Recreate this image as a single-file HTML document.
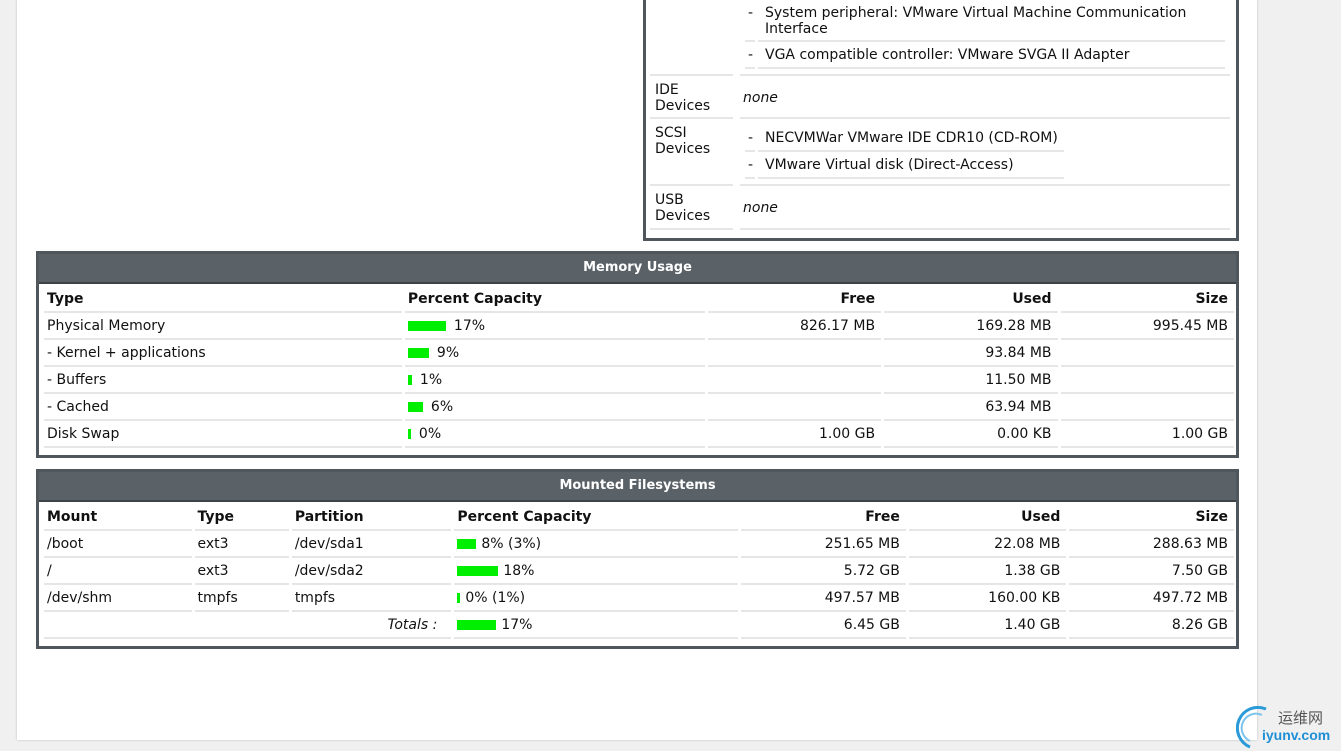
<!DOCTYPE html>
<html><head><meta charset="utf-8"><style>
body{margin:0;width:1341px;height:751px;background:#f0f0f0;position:relative;overflow:hidden;font-family:"DejaVu Sans",Verdana,sans-serif;font-size:14px;color:#111}
.page{position:absolute;left:17px;top:0;width:1240px;height:740px;background:#fff;box-shadow:0 0 2px #bbb}
.box{position:absolute;border:3px solid #50575c;background:#fff;box-sizing:border-box}
.hd{background:#5a6268;color:#fff;font-weight:bold;text-align:center;height:28px;line-height:28px;font-size:13px;border-bottom:2px solid #3d4347}
table{border-collapse:separate;border-spacing:3px 0;table-layout:fixed;margin-left:2px;margin-top:2px}
td{height:25px;border-bottom:2px solid #e6e6e6;padding:0 3px;white-space:nowrap;vertical-align:middle;overflow:hidden}
th{height:25px;border-bottom:2px solid #e6e6e6;padding:0 3px;text-align:left;font-weight:bold;vertical-align:middle}
td.r,th.r{text-align:right;padding-right:6px}
.b{display:inline-block;height:10px;background:#00ee00;vertical-align:-1px;margin-right:8px}
.abs{position:absolute}
.ln{position:absolute;height:2px;background:#e6e6e6}
i{font-style:italic}
</style></head><body>
<div class="page"></div>

<div class="box" style="left:643px;top:-10px;width:596px;height:251px;border-top:none"></div>
<div class="abs" style="left:748px;top:5px;line-height:16px">-</div>
<div class="abs" style="left:765px;top:5px;line-height:16px;width:455px">System peripheral: VMware Virtual Machine Communication Interface</div>
<div class="ln" style="left:745px;top:40px;width:10px"></div><div class="ln" style="left:758px;top:40px;width:467px"></div>
<div class="abs" style="left:748px;top:47px">-</div>
<div class="abs" style="left:765px;top:47px">VGA compatible controller: VMware SVGA II Adapter</div>
<div class="ln" style="left:745px;top:67px;width:10px"></div><div class="ln" style="left:758px;top:67px;width:467px"></div>
<div class="ln" style="left:650px;top:74px;width:83px"></div><div class="ln" style="left:740px;top:74px;width:490px"></div>
<div class="abs" style="left:655px;top:82px;line-height:16px">IDE<br>Devices</div>
<div class="abs" style="left:743px;top:90px"><i>none</i></div>
<div class="ln" style="left:650px;top:117px;width:83px"></div><div class="ln" style="left:740px;top:117px;width:490px"></div>
<div class="abs" style="left:655px;top:125px;line-height:16px">SCSI<br>Devices</div>
<div class="abs" style="left:748px;top:130px">-</div>
<div class="abs" style="left:765px;top:130px">NECVMWar VMware IDE CDR10 (CD-ROM)</div>
<div class="ln" style="left:745px;top:150px;width:10px"></div><div class="ln" style="left:758px;top:150px;width:306px"></div>
<div class="abs" style="left:748px;top:157px">-</div>
<div class="abs" style="left:765px;top:157px">VMware Virtual disk (Direct-Access)</div>
<div class="ln" style="left:745px;top:177px;width:10px"></div><div class="ln" style="left:758px;top:177px;width:306px"></div>
<div class="ln" style="left:650px;top:184px;width:83px"></div><div class="ln" style="left:740px;top:184px;width:490px"></div>
<div class="abs" style="left:655px;top:192px;line-height:16px">USB<br>Devices</div>
<div class="abs" style="left:743px;top:200px"><i>none</i></div>
<div class="ln" style="left:650px;top:228px;width:83px"></div><div class="ln" style="left:740px;top:228px;width:490px"></div>

<div class="box" style="left:36px;top:251px;width:1203px;height:207px">
<div class="hd">Memory Usage</div>
<table style="width:1196px">
<colgroup><col style="width:357px"><col style="width:299px"><col style="width:173px"><col style="width:173px"><col style="width:173px"></colgroup>
<tr><th>Type</th><th>Percent Capacity</th><th class="r">Free</th><th class="r">Used</th><th class="r">Size</th></tr>
<tr><td>Physical Memory</td><td><span class="b" style="width:38px"></span>17%</td><td class="r">826.17 MB</td><td class="r">169.28 MB</td><td class="r">995.45 MB</td></tr>
<tr><td>- Kernel + applications</td><td><span class="b" style="width:21px"></span>9%</td><td class="r"></td><td class="r">93.84 MB</td><td class="r"></td></tr>
<tr><td>- Buffers</td><td><span class="b" style="width:4px"></span>1%</td><td class="r"></td><td class="r">11.50 MB</td><td class="r"></td></tr>
<tr><td>- Cached</td><td><span class="b" style="width:15px"></span>6%</td><td class="r"></td><td class="r">63.94 MB</td><td class="r"></td></tr>
<tr><td>Disk Swap</td><td><span class="b" style="width:3px"></span>0%</td><td class="r">1.00 GB</td><td class="r">0.00 KB</td><td class="r">1.00 GB</td></tr>
</table>
</div>

<div class="box" style="left:36px;top:469px;width:1203px;height:180px">
<div class="hd">Mounted Filesystems</div>
<table style="width:1196px">
<colgroup><col style="width:147px"><col style="width:94px"><col style="width:159px"><col style="width:283px"><col style="width:164px"><col style="width:157px"><col style="width:164px"></colgroup>
<tr><th>Mount</th><th>Type</th><th>Partition</th><th>Percent Capacity</th><th class="r">Free</th><th class="r">Used</th><th class="r">Size</th></tr>
<tr><td>/boot</td><td>ext3</td><td>/dev/sda1</td><td><span class="b" style="width:19px;margin-right:5px"></span>8% (3%)</td><td class="r">251.65 MB</td><td class="r">22.08 MB</td><td class="r">288.63 MB</td></tr>
<tr><td>/</td><td>ext3</td><td>/dev/sda2</td><td><span class="b" style="width:41px;margin-right:5px"></span>18%</td><td class="r">5.72 GB</td><td class="r">1.38 GB</td><td class="r">7.50 GB</td></tr>
<tr><td>/dev/shm</td><td>tmpfs</td><td>tmpfs</td><td><span class="b" style="width:3px;margin-right:5px"></span>0% (1%)</td><td class="r">497.57 MB</td><td class="r">160.00 KB</td><td class="r">497.72 MB</td></tr>
<tr><td colspan="3" class="r" style="padding-right:14px"><i>Totals :</i></td><td><span class="b" style="width:39px;margin-right:5px"></span>17%</td><td class="r">6.45 GB</td><td class="r">1.40 GB</td><td class="r">8.26 GB</td></tr>
</table>
</div>

<svg class="abs" style="left:1236px;top:703px" width="40" height="46" viewBox="0 0 40 46"><path d="M30 6 A18 18 0 1 0 14 44" fill="none" stroke="#2a9ad8" stroke-width="3"/><path d="M26 12 A12 12 0 1 0 14 38" fill="none" stroke="#7cc4ec" stroke-width="2"/></svg>
<div class="abs" style="left:1278px;top:707px;font-family:'Noto Sans CJK SC',sans-serif;font-size:15px;color:#555">运维网</div>
<div class="abs" style="left:1262px;top:727px;font-family:'Liberation Sans',sans-serif;font-size:14px;font-weight:bold;color:#1f8fd6">iyunv.com</div>
</body></html>
